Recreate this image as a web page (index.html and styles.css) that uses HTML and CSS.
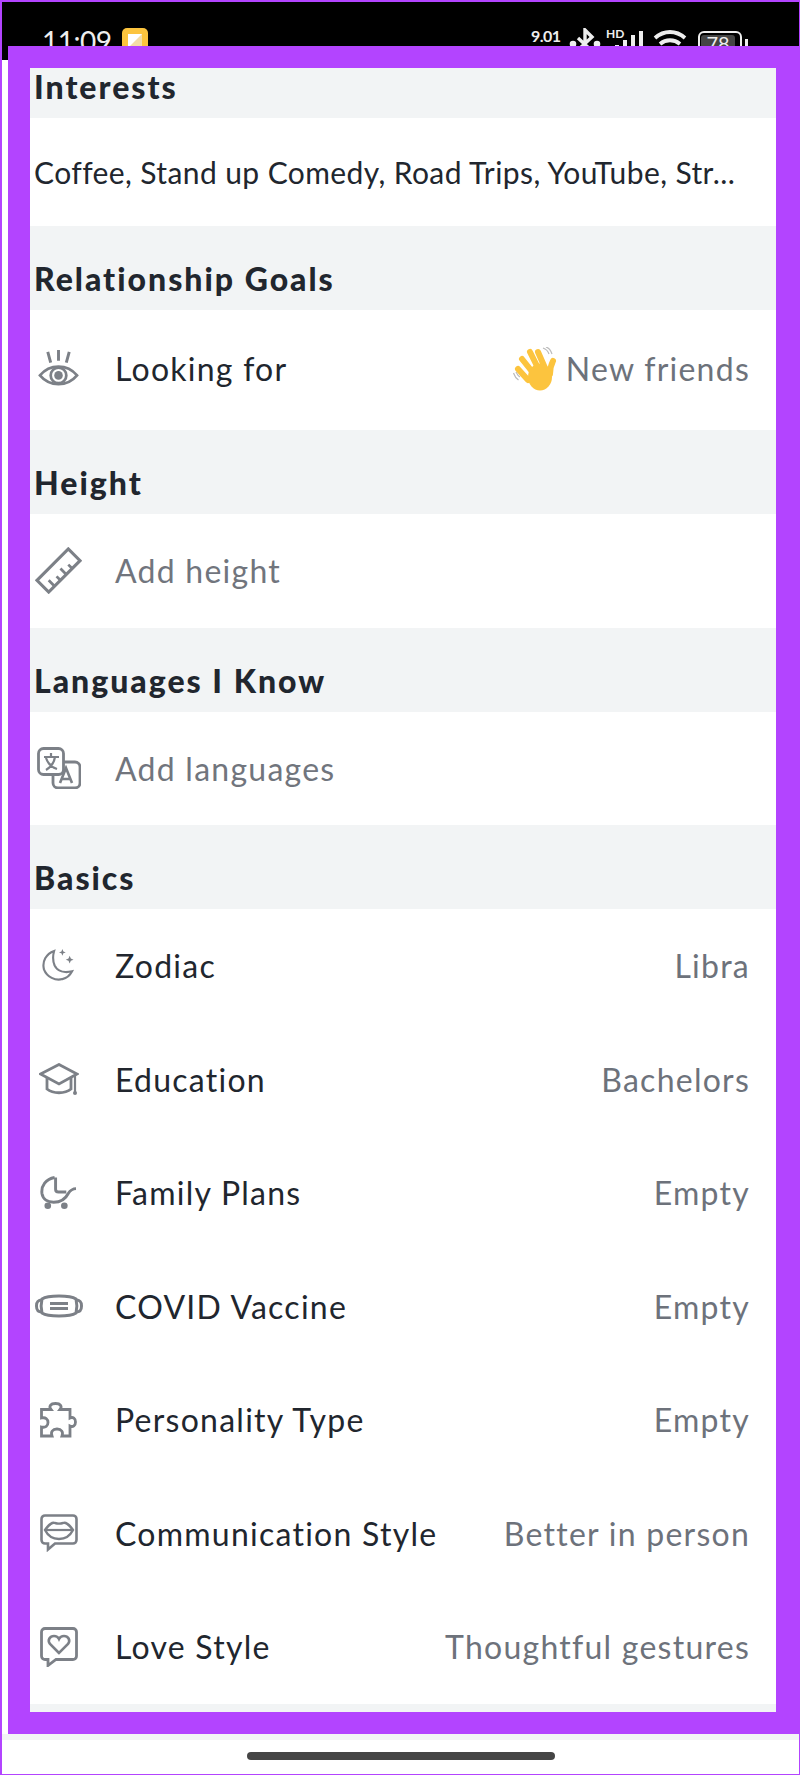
FILE: index.html
```html
<!DOCTYPE html>
<html lang="en">
  <head>
    <meta charset="UTF-8" />
    <meta name="viewport" content="width=device-width, initial-scale=1.0" />
    <title>Edit Profile</title>
    <link rel="stylesheet" href="styles.css">
  </head>
  <body>
    <div class="status-bar">
      <span class="clock">11:09</span>
      <svg class="app-badge" viewBox="0 0 26 26">
        <rect width="26" height="26" rx="5" fill="#fcc43e"/>
        <path d="M6 6h14v14H6z" fill="#fff"/>
        <path d="M20 6v14H6z" fill="#f3dca6"/>
      </svg>
      <span class="net-speed">9.01<br>KB/s</span>
      <svg class="bluetooth" viewBox="0 0 32 32" fill="none" stroke="#eee" stroke-width="3.4">
        <path d="M9 10l14 13-7 7V2l7 7L9 22"/>
        <circle cx="4" cy="16" r="1.600" fill="#eee"/>
        <circle cx="28" cy="16" r="1.600" fill="#eee"/>
      </svg>
      <div class="signal">
        <span class="hd">HD</span>
        <svg viewBox="0 0 28 32" fill="#eee">
          <rect x="0" y="14" width="4" height="18"/>
          <rect x="8" y="9" width="4" height="23"/>
          <rect x="16" y="4" width="4" height="28"/>
          <rect x="24" y="0" width="4" height="32"/>
        </svg>
      </div>
      <svg class="wifi" viewBox="0 0 34 32" fill="none" stroke="#eee" stroke-width="3.8">
        <path d="M2 9c9-8 21-8 30 0"/>
        <path d="M7 15c6-5 14-5 20 0"/>
        <path d="M12 21c3-2 7-2 10 0"/>
      </svg>
      <div class="battery"><span class="battery-level">78</span></div>
      <span class="battery-tip"></span>
    </div>

    <main class="frame">
      <div class="panel">
        <h2 class="section-title first">Interests</h2>
        <div class="interests">Coffee, Stand up Comedy, Road Trips, YouTube, Str...</div>

        <h2 class="section-title">Relationship Goals</h2>
        <div class="row tall">
          <span class="icon-slot">
            <svg class="icon eye" viewBox="0 0 42 38" fill="none">
              <path d="M10 2l3 11M21 0v11M32 2l-3 11" stroke-width="3"/>
              <path d="M2 26c10-12 28-12 38 0-10 12-28 12-38 0z" stroke-width="2.800"/>
              <circle cx="21" cy="26" r="8" stroke-width="2.800"/>
              <circle cx="21" cy="26" r="4.400" class="fill"/>
            </svg>
          </span>
          <span class="label">Looking for</span>
          <svg class="wave" viewBox="0 0 44 44">
            <g fill="none" stroke="#bbb" stroke-width="1.200">
              <path d="M0.500 26c1 3 2 5 5 7M3 25c1 2 2 4 4 5M30 1c3 1 5 3 6 6M33 0c3 1 5 4 6 7"/>
            </g>
            <g fill="none" stroke="#fcc43e" stroke-width="6" stroke-linecap="round">
              <path d="M5 22l10 11"/>
              <path d="M9 12l12 15"/>
              <path d="M17 5l9 18"/>
              <path d="M25 5l7 16"/>
              <path d="M40 14c-2 4-3 8-3 13"/>
            </g>
            <ellipse cx="27" cy="30" rx="12" ry="13.500" fill="#fcc43e"/>
          </svg>
          <span class="value">New friends</span>
        </div>

        <h2 class="section-title">Height</h2>
        <div class="row mid">
          <span class="icon-slot">
            <svg class="icon ruler" viewBox="0 0 48 48" fill="none">
              <path d="M2 34L34 2l12 12-32 32z" stroke-width="3.200"/>
              <path d="M20 40l-6-6M26 34l-4-4M32 28l-6-6M38 22l-4-4" stroke-width="2.800"/>
            </svg>
          </span>
          <span class="label muted">Add height</span>
        </div>

        <h2 class="section-title">Languages I Know</h2>
        <div class="row short">
          <span class="icon-slot">
            <svg class="icon translate" viewBox="0 0 44 42" fill="none">
              <rect x="1.500" y="1.500" width="25" height="26" rx="5" stroke-width="2.800"/>
              <path d="M16 28v8a5 5 0 0 0 5 5h17a5 5 0 0 0 5-5V20a5 5 0 0 0-5-5H27" stroke-width="2.800"/>
              <path d="M7 10h15M14 6v4M9 23c5-3 8-7 9-13M9 11c2 6 5 9 11 11" stroke-width="2.200"/>
              <path d="M23 36l6-15 6 15M25 32h8" stroke-width="2.600"/>
            </svg>
          </span>
          <span class="label muted">Add languages</span>
        </div>

        <h2 class="section-title">Basics</h2>
        <div class="row">
          <span class="icon-slot">
            <svg class="icon moon" viewBox="0 0 34 34" fill="none">
              <path d="M12.500 2C4 5 0 13 2 21c3 8 12 12 19 10 5-1 8-4 10-8-8 2-15 0-18-6-2-5-2-10-.5-15z" stroke-width="2.200"/>
              <path d="M21 0l1 2.500 2.500 1-2.500 1-1 2.500-1-2.500-2.500-1 2.500-1zM28.500 7l1.200 2.800 2.800 1.200-2.800 1.200-1.200 2.800-1.200-2.800-2.800-1.200 2.800-1.200z" class="fill"/>
            </svg>
          </span>
          <span class="label">Zodiac</span>
          <span class="value">Libra</span>
        </div>
        <div class="row">
          <span class="icon-slot">
            <svg class="icon cap" viewBox="0 0 40 32" fill="none">
              <path d="M20 1.500L1.500 11 20 21 38 11z" stroke-width="2.800"/>
              <path d="M8 15v11c6 5 18 5 24 0V15" stroke-width="2.800"/>
              <path d="M36 12v17" stroke-width="2.200"/>
              <circle cx="36" cy="30" r="2" class="fill"/>
            </svg>
          </span>
          <span class="label">Education</span>
          <span class="value">Bachelors</span>
        </div>
        <div class="row">
          <span class="icon-slot">
            <svg class="icon stroller" viewBox="0 0 38 34" fill="none">
              <path d="M15 1.500C6 3 1 10 2 18c1 6 6 9 12 9s12-3 15-9c2-3 4-5 8-5" stroke-width="3"/>
              <path d="M16 1.500v12c0 2 1 3 3 3h8" stroke-width="3"/>
              <circle cx="8" cy="30.500" r="3.400" class="fill"/>
              <circle cx="25" cy="30.500" r="3.400" class="fill"/>
            </svg>
          </span>
          <span class="label">Family Plans</span>
          <span class="value">Empty</span>
        </div>
        <div class="row">
          <span class="icon-slot">
            <svg class="icon mask" viewBox="0 0 48 24" fill="none">
              <path d="M7 5c6-4 28-4 34 0 1 4 1 10 0 14-6 4-28 4-34 0-1-4-1-10 0-14z" stroke-width="3"/>
              <path d="M7 6C2 6 1.500 9 1.500 12s.5 6 5.500 6M41 6c5 0 5.500 3 5.500 6s-.5 6-5.500 6" stroke-width="3"/>
              <path d="M15 9.500h18M15 14.500h18" stroke-width="2.800"/>
            </svg>
          </span>
          <span class="label">COVID Vaccine</span>
          <span class="value">Empty</span>
        </div>
        <div class="row">
          <span class="icon-slot">
            <svg class="icon puzzle" viewBox="0 0 37 36" fill="none">
              <path d="M1.500 7.500h9.500c-2.500-3-.5-6 4.500-6s7 3 4.500 6h10v8.500c3-1.500 5.500.5 5.500 4s-2.500 5.500-5.500 4v10h-8c1.500-4-.5-7-5-7s-6.500 3-5 7H1.500V25c4 1 6.500-1 6.500-4.500S5.500 15 1.500 16z" stroke-width="2.800"/>
            </svg>
          </span>
          <span class="label">Personality Type</span>
          <span class="value">Empty</span>
        </div>
        <div class="row">
          <span class="icon-slot">
            <svg class="icon bubble" viewBox="0 0 38 38" fill="none">
              <path d="M5 1.500h28a3.500 3.500 0 0 1 3.500 3.500v21a3.500 3.500 0 0 1-3.500 3.500H15l-7 6v-6H5A3.500 3.500 0 0 1 1.500 26V5A3.500 3.500 0 0 1 5 1.500z" stroke-width="2.600"/>
              <path d="M5 16c4-6 8-8 10-7 3 1 5 1 8 0 2-1 6 1 10 7-3 6-8 9-14 9s-11-3-14-9z" stroke-width="2.400"/>
              <path d="M5 16h28" stroke-width="2.200"/>
            </svg>
          </span>
          <span class="label">Communication Style</span>
          <span class="value">Better in person</span>
        </div>
        <div class="row">
          <span class="icon-slot">
            <svg class="icon bubble" viewBox="0 0 38 40" fill="none">
              <path d="M5 1.500h28a3.500 3.500 0 0 1 3.500 3.500v24a3.500 3.500 0 0 1-3.500 3.500H16l-8 6v-6H5A3.500 3.500 0 0 1 1.500 29V5A3.500 3.500 0 0 1 5 1.500z" stroke-width="2.800"/>
              <path d="M19 26l-9-9c-3-4 0-8 4-8 2 0 4 1 5 3 1-2 3-3 5-3 4 0 7 4 4 8z" stroke-width="2.600"/>
            </svg>
          </span>
          <span class="label">Love Style</span>
          <span class="value">Thoughtful gestures</span>
        </div>
        <div class="panel-end"></div>
      </div>
    </main>

    <div class="bottom-strip"></div>
    <div class="home-area"><span class="home-bar"></span></div>
  </body>
</html>
```

FILE: styles.css
```css
html,
body {
  margin: 0;
  padding: 0;
}

body {
  width: 800px;
  height: 1775px;
  box-sizing: border-box;
  border: 2px solid #b344ff;
  border-bottom-width: 1px;
  border-right-width: 1px;
  background: #fff;
  font-family: Lato, "Liberation Sans", sans-serif;
  overflow: hidden;
}

/* status bar, partly covered by the purple frame */
.status-bar {
  height: 58px;
  background: #000;
  color: #eee;
  display: flex;
  align-items: flex-start;
  padding: 26px 0 0 40px;
  box-sizing: border-box;
}

.clock {
  font-size: 28px;
  line-height: 28px;
  width: 80px;
  margin-top: -1px;
  letter-spacing: -0.5px;
}

.app-badge {
  width: 26px;
  height: 26px;
  flex: none;
}

.net-speed {
  margin-left: 383px;
  font-size: 16px;
  line-height: 16px;
  width: 38px;
  font-weight: 700;
  letter-spacing: -0.5px;
}

.bluetooth {
  width: 32px;
  height: 32px;
  flex: none;
}

.signal {
  position: relative;
  margin-left: 5px;
  width: 38px;
}

.signal svg {
  width: 28px;
  height: 32px;
  margin-left: 9px;
  margin-top: 3px;
  display: block;
}

.hd {
  position: absolute;
  left: 0;
  top: -2px;
  font-size: 12px;
  font-weight: 700;
}

.wifi {
  width: 34px;
  height: 32px;
  margin-left: 9px;
  margin-top: 1px;
}

.battery {
  width: 44px;
  height: 32px;
  margin-left: 11px;
  margin-top: 3px;
  box-sizing: border-box;
  border: 2px solid #eee;
  border-radius: 6px;
  padding: 2px 1px;
}

.battery-level {
  display: block;
  width: 34px;
  height: 24px;
  background: #444;
  border-radius: 3px;
  font-size: 20px;
  line-height: 16px;
  text-align: center;
}

.battery-tip {
  width: 3px;
  height: 8px;
  margin: 11px 0 0 3px;
  background: #eee;
}

/* purple frame */
.frame {
  position: relative;
  margin: -14px 0 0 6px;
  height: 1688px;
  box-sizing: border-box;
  background: #b344ff;
  padding: 22px 23px 22px 22px;
}

.panel {
  height: 1644px;
  background: #fff;
  display: flex;
  flex-direction: column;
  overflow: hidden;
}

.section-title {
  margin: 0;
  height: 84px;
  flex: none;
  padding: 0 0 7px 4px;
  box-sizing: border-box;
  display: flex;
  align-items: flex-end;
  background: #f2f4f5;
  color: #21262e;
  font-size: 32px;
  font-weight: 900;
  line-height: 48px;
  letter-spacing: 2px;
}

.section-title.first {
  height: 50px;
}

.interests {
  height: 108px;
  flex: none;
  padding-left: 4px;
  box-sizing: border-box;
  display: flex;
  align-items: center;
  color: #21262e;
  font-size: 30px;
  letter-spacing: 0.4px;
}

.row {
  height: 113.5px;
  flex: none;
  display: flex;
  align-items: center;
  padding-right: 26px;
  box-sizing: border-box;
  font-size: 32px;
  letter-spacing: 1.25px;
}

.row.tall {
  height: 120px;
  padding-bottom: 3px;
}

.row.mid {
  height: 114px;
  padding-bottom: 2px;
}

.row.short {
  height: 113px;
  padding-bottom: 1px;
}

.icon-slot {
  width: 57px;
  margin-right: 28px;
  flex: none;
  display: flex;
  justify-content: center;
}

.icon {
  display: block;
  stroke: #7c8087;
}

.icon .fill {
  fill: #7c8087;
  stroke: none;
}

.eye { width: 41px; }
.ruler { width: 47px; }
.translate { width: 44px; }
.moon { width: 33px; }
.cap { width: 40px; }
.stroller { width: 37px; }
.mask { width: 48px; }
.puzzle { width: 37px; }
.bubble { width: 38px; }

.label {
  color: #21262e;
}

.label.muted {
  color: #71757d;
}

.value {
  margin-left: auto;
  color: #6d727b;
}

.wave {
  width: 44px;
  height: 44px;
  margin-left: auto;
  margin-right: 9px;
}

.wave + .value {
  margin-left: 0;
}

.panel-end {
  flex: 1;
  background: #f2f4f5;
}

.bottom-strip {
  height: 6px;
  background: #f2f4f5;
}

.home-area {
  display: flex;
  justify-content: center;
  padding-top: 12px;
}

.home-bar {
  width: 308px;
  height: 8px;
  border-radius: 4px;
  background: #454545;
}
```
